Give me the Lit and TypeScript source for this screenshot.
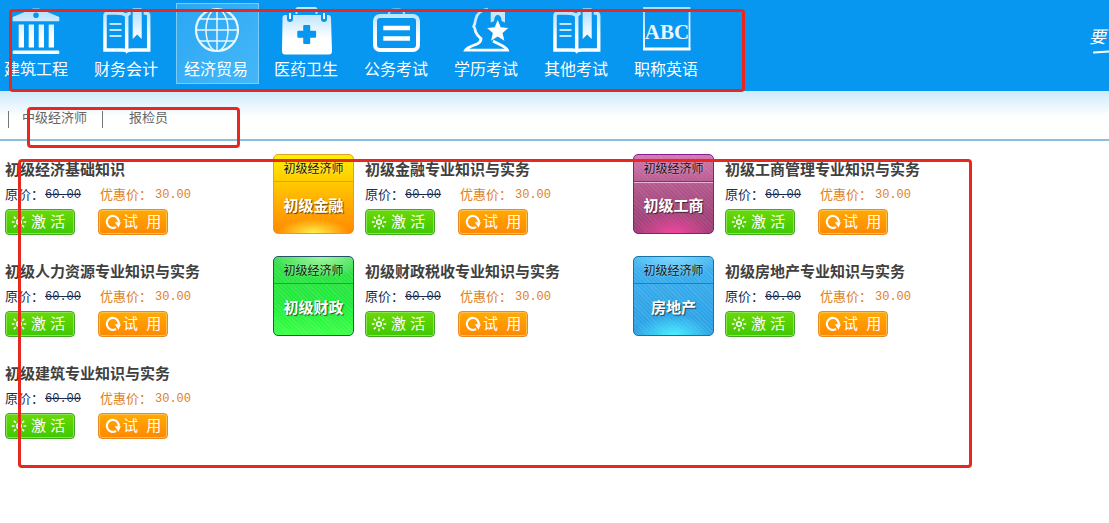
import { LitElement, html, css, svg, nothing } from "lit";
import { customElement, property } from "lit/decorators.js";
import { classMap } from "lit/directives/class-map.js";

const book = svg`
  <path d="M24.7 43V9C22 6 18 6 14 6H6C4 6 3 7 3 9v34h17c2 0 4 0 4.700 1 1-1 3-1 5-1h17V9c0-2-1-3-3-3h-2M24.700 9c1-2 2-3 4-3"
    fill="none" stroke="url(#fade)" stroke-width="3.500"/>
  <path d="M7.500 17h12M7.500 23h12M7.500 29h12" stroke="#fff" stroke-width="1.600"/>
  <path d="M30.700 1.300h9V32l-4.500-4.500L30.700 32z" fill="url(#fade)"/>`;

const icons: Record<string, unknown> = {
  hall: svg`
    <path fill-rule="evenodd" fill="url(#fade)" d="M21 1.500h6L47.300 10v4.300H.7V10zM24 5.500a2.800 2.800 0 1 0 0 5.600 2.800 2.800 0 0 0 0-5.600z"/>
    <path fill="url(#fade)" d="M6.700 17.500H12v23H6.700zM16.700 17.500H22v23h-5.300zM26.700 17.500H32v23h-5.300zM36.700 17.500H42v23h-5.300z"/>
    <rect x=".7" y="43.500" width="46.600" height="3.500" rx="1" fill="#fff"/>`,
  book,
  globe: svg`
    <g fill="none" stroke="#e9f7ff" stroke-width="1.500">
      <circle cx="25" cy="23" r="21" stroke-width="2.200"/>
      <ellipse cx="25" cy="23" rx="11" ry="21"/>
      <path d="M25 2v42M4 23h42M7 12h36M7 34h36"/>
    </g>`,
  kit: svg`
    <path d="M14.500 7V2.500Q14.500 1 16 1h17q1.500 0 1.500 1.500V7" fill="none" stroke="#bfe5ff" stroke-width="2"/>
    <path fill="url(#fade)" d="M3 8h2v4a3 3 0 0 0 6 0V8h28v4a3 3 0 0 0 6 0V8h1q3 0 3 3l1 33q0 3.500-3 3.500H3q-3 0-3-3.500L.5 11Q.5 8 3 8z"/>
    <path d="M8 6v6M42 6v6" stroke="#fff" stroke-width="2"/>
    <path fill="#0796f0" d="M22.200 18h5q1 0 1 1v4.700h4.900q1 0 1 1v5q0 1-1 1h-4.900V36q0 1-1 1h-5q-1 0-1-1v-5.300h-4.900q-1 0-1-1v-5q0-1 1-1h4.900V19q0-1 1-1z"/>`,
  briefcase: svg`
    <path d="M16.500 8q1-5.500 5-5.500h6q4 0 5 5.500" fill="none" stroke="#a9dcff" stroke-width="2"/>
    <rect x="3" y="9" width="43" height="34" rx="5" fill="none" stroke="url(#fade)" stroke-width="4"/>
    <path d="M11.300 21H38M11.300 31.500H38" stroke="#fff" stroke-width="4.500"/>`,
  graduate: svg`
    <path d="M26 2.200C19 3 14.500 7 13.500 13c-.3 2-.2 3-1.800 6.500 1.300 1 1.300 3.500 2 5.500 1 3 3 4.500 5.300 6.500 0 3-1 4-3.500 5.200C10 39 5 40 3.500 43.200h42c-1-3.700-8-5.700-14.500-9.200"
      fill="none" stroke="url(#fade)" stroke-width="2.800"/>
    <path fill="#c5e8ff" d="M28.700 2H43v13.500l-3.500-1.500c0-3.500-1.500-6-3.800-6s-3.500 2.500-3.500 6l-3.500 1.500z"/>
    <path fill="#fff" d="M35.700 13l3 7.300 7.600.6-5.800 5.200 1.900 7.700-6.700-4.200-6.700 4.200 1.900-7.700-5.800-5.200 7.600-.6z"/>`,
  abc: svg`
    <path d="M2 1h45.500v41H2z" fill="none" stroke="url(#fade)" stroke-width="1.800"/>
    <path d="M1.100 42h47.300" stroke="#fff" stroke-width="3"/>
    <text class="letters" x="25" y="32" text-anchor="middle">ABC</text>`,
};

@customElement("nav-icon")
class NavIcon extends LitElement {
  static styles = css`
    :host { display: block; height: 48px; }
    svg { display: block; overflow: visible; }
    .letters { font: bold 21px "Liberation Serif", serif; fill: #e9f7ff; }
  `;
  @property() name = "book";
  render() {
    return html`<svg width="48" height="48" viewBox="0 0 48 48" aria-hidden="true">
      <defs>
        <linearGradient id="fade" gradientUnits="userSpaceOnUse" x1="0" y1="0" x2="0" y2="48">
          <stop offset="0" stop-color="#a9dcff"/><stop offset=".65" stop-color="#fff"/>
        </linearGradient>
      </defs>
      ${icons[this.name]}
    </svg>`;
  }
}

interface Course {
  title: string;
  cover?: { text: string; tone: string };
}

@customElement("course-card")
class CourseCard extends LitElement {
  static styles = css`
    :host { display: flex; gap: 11px; height: 82px; }
    .cover {
      box-sizing: border-box; width: 81px; height: 80px; flex: none;
      border: 1px solid; border-radius: 5px; text-align: center;
      display: flex; flex-direction: column; overflow: hidden;
    }
    .level { font-size: 12px; line-height: 26px; height: 27px; box-sizing: border-box;
      border-bottom: 1px solid; color: #111; white-space: nowrap; text-shadow: 0 0 2px #fff9; }
    .subject { flex: 1; font-size: 15px; line-height: 46px; font-weight: bold; color: #fff;
      text-shadow: 1px 1px 1px #0009; white-space: nowrap; }
    .gold { border-color: #d9a32a; background: radial-gradient(ellipse 36px 14px at 50% 100%, #fff34a, #fff34a00),
      linear-gradient(#fff000, #ffb400 55%, #ff8a00); }
    .gold .level { border-color: #e0a800; }
    .plum { border-color: #8a1a8c; background: radial-gradient(ellipse 44px 22px at 50% 100%, #f0489f, #f0489f00),
      repeating-linear-gradient(45deg, #ffffff12 0 1px, #0000 1px 3px),
      linear-gradient(#d678b0, #b3588c 40%, #963c70); }
    .plum .level { border-color: #8f2f72; box-shadow: 0 1px #e9b4d6; }
    .green { border-color: #27506b; background:
      radial-gradient(ellipse 50px 20px at 60% 0, #a0f8a0, #a0f8a000),
      repeating-linear-gradient(45deg, #ffffff18 0 1px, #0000 1px 3px),
      linear-gradient(#35dd4a, #22ec3c 60%, #3cff48); }
    .green .level { border-color: #1fa63a; }
    .blue { border-color: #1474a8; background: radial-gradient(ellipse 40px 20px at 50% 100%, #4cf0ff, #4cf0ff00),
      radial-gradient(ellipse 50px 18px at 50% 0, #7fd8ff, #7fd8ff00),
      repeating-linear-gradient(45deg, #ffffff18 0 1px, #0000 1px 3px),
      linear-gradient(#3fb2ef, #2a9fe4); }
    .blue .level { border-color: #1782bd; }
    .info { padding-top: 3px; white-space: nowrap; }
    .title { margin: 0; font-size: 15px; line-height: 24px; color: #404040; }
    .prices { display: flex; margin: 0; height: 28px; font-size: 13px; line-height: 26px; color: #1b2b4d; }
    .amount { font: 12px/26px "Liberation Mono", monospace; padding-top: 1px; }
    .original { width: 95px; display: flex; gap: 1px; }
    .sale { display: flex; gap: 3px; color: #e07f22; }
    .actions { display: flex; gap: 23px; }
    .button {
      box-sizing: border-box; width: 70px; height: 26px; padding: 0 0 0 5px; border-radius: 4px;
      display: flex; align-items: center; gap: 3px; color: #fff;
      font: 15px/24px "Liberation Sans", "Noto Sans CJK SC", sans-serif; white-space: nowrap; cursor: pointer;
    }
    .activate { border: 1px solid #40a81e; background: linear-gradient(#6cd808, #3fc800); box-shadow: inset 0 0 0 1px #8ae552; gap: 4px; }
    .trial { border: 1px solid #e88a20; background: linear-gradient(#ffab00, #ff8800); box-shadow: inset 0 0 0 1px #ffc14d; padding-left: 6px; gap: 2px; }
    svg { flex: none; }
  `;
  @property({ attribute: false }) course!: Course;
  render() {
    const { title, cover } = this.course;
    return html`
      ${cover
        ? html`<div class=${classMap({ cover: true, [cover.tone]: true })}>
            <div class="level">初级经济师</div>
            <div class="subject">${cover.text}</div>
          </div>`
        : nothing}
      <div class="info">
        <h3 class="title">${title}</h3>
        <p class="prices">
          <span class="original">原价：<s class="amount">60.00</s></span>
          <span class="sale">优惠价：<span class="amount">30.00</span></span>
        </p>
        <div class="actions">
          <button class="button activate" type="button">
            <svg width="16" height="16" viewBox="0 0 16 16" fill="none" stroke="#fff" stroke-width="1.500" aria-hidden="true">
              <circle cx="8" cy="8" r="2.300"/>
              <path d="M8 .8v2.700M8 12.500v2.700M.8 8h2.700M12.500 8h2.700M2.900 2.900l1.900 1.900M11.200 11.200l1.900 1.900M2.900 13.100l1.900-1.900M11.200 4.800l1.900-1.900"/>
            </svg>激 活
          </button>
          <button class="button trial" type="button">
            <svg width="16" height="16" viewBox="0 0 16 16" fill="none" stroke="#fff" stroke-width="2.200" aria-hidden="true">
              <path d="M6.500 13.800A6 6 0 1 1 13.800 8.500"/><path d="M6 13.700q3 .8 5-.9"/>
              <path d="M9.800 8.200h6l-2.300 5.500z" fill="#fff" stroke="none"/>
            </svg>试&nbsp; 用
          </button>
        </div>
      </div>`;
  }
}

@customElement("app-root")
class AppRoot extends LitElement {
  static styles = css`
    :host {
      display: block; position: relative; min-height: 100vh; overflow: hidden; background: #fff;
      font-family: "Noto Sans CJK SC", sans-serif;
    }
    .header { height: 91px; box-sizing: border-box; padding-top: 3px; background: #0796f0;
      display: flex; justify-content: space-between; }
    .nav { display: flex; gap: 7px; margin-left: -4px; }
    .item {
      box-sizing: border-box; width: 83px; height: 81px; border: 1px solid transparent;
      padding: 3px 3px 0 0; display: flex; flex-direction: column; align-items: center; gap: 1px;
      color: #fff; font-size: 16px; line-height: 24px; text-decoration: none; white-space: nowrap;
    }
    .current { border-color: #7cccf9; background: linear-gradient(135deg, #2ba7f4, #45b7f8); }
    .slogan { width: 20px; padding-top: 21px; color: #fff; font-size: 17px; line-height: 24px; font-style: italic; }
    .slogan svg { display: block; }
    .subnav { height: 50px; box-sizing: border-box; padding: 16px 0 0 8px; border-bottom: 2px solid #8cbfdd;
      background: linear-gradient(#cdeafa, #fff 26px); display: flex; font-size: 13px; line-height: 20px; }
    .sublink { color: #666; text-decoration: none; height: 20px; }
    .sublink.first { width: 80px; padding-left: 13px; }
    .sublink.second { padding-left: 26px; }
    .rule { width: 1px; height: 17px; margin-top: 4px; background: #777; }
    .courses { display: grid; grid-template-columns: 268px 360px 360px; row-gap: 20px; padding: 13px 0 0 5px; }
    .frame { position: absolute; box-sizing: border-box; border: 3px solid #e8281f; border-radius: 4px; pointer-events: none; }
    .frame-nav { left: 9px; top: 9px; width: 736px; height: 83px; }
    .frame-sub { left: 27px; top: 107px; width: 213px; height: 41px; }
    .frame-list { left: 18px; top: 159px; width: 954px; height: 309px; }
  `;

  private categories = [
    ["hall", "建筑工程"], ["book", "财务会计"], ["globe", "经济贸易"], ["kit", "医药卫生"],
    ["briefcase", "公务考试"], ["graduate", "学历考试"], ["book", "其他考试"], ["abc", "职称英语"],
  ];

  private courses: Course[] = [
    { title: "初级经济基础知识" },
    { title: "初级金融专业知识与实务", cover: { text: "初级金融", tone: "gold" } },
    { title: "初级工商管理专业知识与实务", cover: { text: "初级工商", tone: "plum" } },
    { title: "初级人力资源专业知识与实务" },
    { title: "初级财政税收专业知识与实务", cover: { text: "初级财政", tone: "green" } },
    { title: "初级房地产专业知识与实务", cover: { text: "房地产", tone: "blue" } },
    { title: "初级建筑专业知识与实务" },
  ];

  render() {
    return html`
      <header class="header">
        <nav class="nav">
          ${this.categories.map(([icon, label]) => html`
            <a href="#" class=${classMap({ item: true, current: icon === "globe" })}>
              <nav-icon name=${icon}></nav-icon><span>${label}</span>
            </a>`)}
        </nav>
        <div class="slogan">要
          <svg width="20" height="6" viewBox="0 0 20 6" aria-hidden="true">
            <path d="M5 4.500L20 3.500" stroke="#fff" stroke-width="2.200" stroke-linecap="round"/>
          </svg>
        </div>
      </header>
      <nav class="subnav">
        <span class="rule"></span><a href="#" class="sublink first">中级经济师</a>
        <span class="rule"></span><a href="#" class="sublink second">报检员</a>
      </nav>
      <main class="courses">
        ${this.courses.map((c) => html`<course-card .course=${c}></course-card>`)}
      </main>
      <div class="frame frame-nav"></div>
      <div class="frame frame-sub"></div>
      <div class="frame frame-list"></div>`;
  }
}
